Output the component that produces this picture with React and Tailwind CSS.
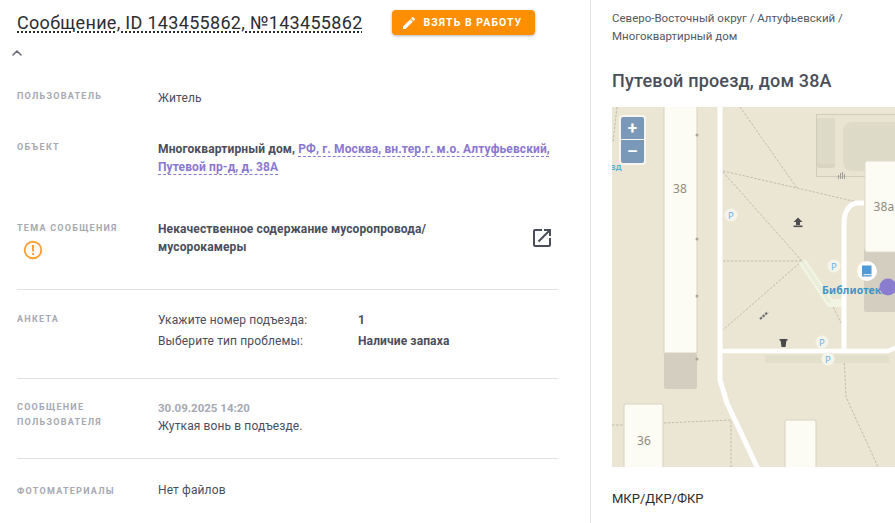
import { ChevronUp } from 'lucide-react'

// ── MAP ──
const parkings = [[119, 108], [222, 159], [210, 235], [216, 252]]

function MapDrawing() {
  return (
    <svg viewBox="0 0 283 360" className="block w-[283px] h-[360px]" style={{ fontFamily: '"Noto Sans", sans-serif' }}>
      <rect width="283" height="360" fill="#ebe6d3" />

      {/* top complex */}
      <rect x="204.5" y="7.5" width="90" height="62" fill="#e8e4d1" stroke="#d0ccbc" />
      <rect x="205" y="11" width="18" height="50" rx="3" fill="#d8d4c1" />
      <rect x="205" y="11" width="18" height="46" rx="3" fill="#dedac8" />
      <rect x="231" y="15" width="70" height="49" rx="9" fill="#dedac8" />

      {/* dashed paths */}
      <g fill="none" stroke="#b6b09c" strokeWidth="0.8" strokeDasharray="2.5 1.5">
        <path d="M111 64L185 81L245 95" />
        <path d="M128 0L185 81" />
        <path d="M111 65L190 154" />
        <path d="M111 154H190" />
        <path d="M190 154L111 223" />
        <path d="M5 0L1 35" />
        <path d="M218 193L229 216" />
        <path d="M232 248L234 290L266 360" />
        <path d="M0 318H12" />
        <path d="M52 316L119 313V360" />
      </g>

      {/* pedestrian strip */}
      <path d="M190 154L218 196H232" fill="none" stroke="#f1f4e2" strokeWidth="8" />
      <path d="M190 154L218 196" fill="none" stroke="#e1e5d2" strokeWidth="3" strokeDasharray="1 1" />
      <rect x="153" y="248" width="124" height="8" fill="#e2dfcb" />

      {/* buildings */}
      <rect x="52" y="-4" width="33" height="250" fill="#fcfbf4" stroke="#d8d3bf" />
      <rect x="52" y="246" width="33" height="36" rx="2" fill="#d3cebf" />
      <circle cx="85" cy="28" r="1.5" fill="#aaa698" />
      <circle cx="85" cy="132" r="1.5" fill="#aaa698" />
      <circle cx="85" cy="189" r="1.5" fill="#aaa698" />
      <circle cx="85" cy="252" r="1.5" fill="#aaa698" />
      <rect x="252" y="140" width="40" height="65" rx="2" fill="#d3cebf" />
      <rect x="253" y="54" width="40" height="91" rx="2" fill="#fcfbf4" stroke="#e0dccb" />
      <rect x="12" y="297" width="39" height="70" rx="2" fill="#fcfbf4" stroke="#d8d3bf" />
      <rect x="173" y="313" width="31" height="60" rx="2" fill="#fcfbf4" stroke="#d8d3bf" />

      {/* roads */}
      <g fill="none" stroke="#ffffff" strokeWidth="5">
        <path d="M108 -2V273L115 296L146 362" />
        <path d="M108 244H276L285 240" strokeWidth="4.5" />
        <path d="M252 96H246C238 96 232 104 232 116V244" />
      </g>

      {/* house numbers */}
      <g fill="#8f8c80" fontSize="12" textAnchor="middle">
        <text x="68" y="86">38</text>
        <text x="272" y="104">38а</text>
        <text x="32" y="338">36</text>
      </g>

      {/* parking */}
      {parkings.map(([x, y]) => (
        <g key={`${x}-${y}`}>
          <circle cx={x} cy={y} r="6.5" fill="#f5f4ea" />
          <text x={x} y={y + 3.5} fontSize="9.5" textAnchor="middle" fill="#6eb1e6">P</text>
        </g>
      ))}

      {/* small pois */}
      <path d="M186 110.5L190.5 115H188V118H184V115H181.5Z" fill="#4e4e52" />
      <rect x="181.5" y="118.5" width="9" height="1.6" fill="#4e4e52" />
      <g fill="#9b9a94">
        <rect x="226" y="68" width="1" height="4" />
        <rect x="228" y="66" width="1" height="6" />
        <rect x="230" y="65" width="1" height="7" />
        <rect x="232" y="67" width="1" height="5" />
      </g>
      <path d="M148 212L156 205" stroke="#6d6d70" strokeWidth="2.2" strokeDasharray="2.5 1" />
      <path d="M168.5 233H174.5L173.5 240H169.5Z" fill="#48484c" />
      <rect x="167.5" y="232" width="8" height="1.5" fill="#48484c" />

      {/* library */}
      <circle cx="255" cy="164" r="10" fill="#ffffff" />
      <path d="M250 158.5H259.5V169.5H250Z" fill="#4f9ad6" />
      <rect x="251.5" y="167" width="8" height="1.2" fill="#d9ecf8" />
      <text x="210" y="187" fontSize="10.5" fontWeight="700" fill="#3d94c9">Библиотека</text>
      <circle cx="276" cy="180" r="8.5" fill="#8a7ccf" />

      <text x="-1" y="63" fontSize="9" fontWeight="600" fill="#52b2d6">зд</text>
    </svg>
  )
}

// ── ROW ──
function Row({ label, className, children }) {
  return (
    <div className={`grid grid-cols-[141px_1fr] ${className}`}>
      <div>{label}</div>
      <div>{children}</div>
    </div>
  )
}

const Label = ({ children, className = '' }) => (
  <p className={`text-[9px] leading-[15px] font-bold uppercase tracking-[0.14em] text-[#a6a9b3] ${className}`}>{children}</p>
)

export default function App() {
  return (
    <div className="flex h-[523px] w-[895px] overflow-hidden bg-white text-[12px] leading-[18px] tracking-[0.01em] text-[#4a4e5c]" style={{ fontFamily: 'Roboto, sans-serif' }}>
      {/* Left panel */}
      <div className="w-[591px] shrink-0 border-r border-[#e0e0e0] pl-[17px] pr-[32px]">
        <div className="flex h-[36px] items-start pt-[10px]">
          <h1 className="mt-[1px] text-[18px] leading-[24px] font-normal tracking-[0.31px] text-[#2b2d33] underline decoration-dotted decoration-[2px] underline-offset-[2px] whitespace-nowrap">
            Сообщение, ID 143455862, №143455862
          </h1>
          <button className="ml-[29px] flex h-[25px] w-[143px] items-center rounded-[4px] bg-[#ff8f00] pl-[9px] text-[10.5px] font-bold uppercase tracking-[0.1em] text-white shadow-[0_1px_3px_rgba(0,0,0,0.3)] whitespace-nowrap">
            <svg viewBox="0 0 24 24" className="h-[16px] w-[16px]" fill="currentColor">
              <path d="M3 17.25V21h3.75L17.81 9.94l-3.75-3.75L3 17.25zM20.71 7.04a1 1 0 0 0 0-1.41l-2.34-2.34a1 1 0 0 0-1.41 0l-1.83 1.83 3.75 3.75 1.83-1.83z" />
            </svg>
            <span className="ml-[7px]">Взять в работу</span>
          </button>
        </div>

        <div className="h-[52px] pt-[9px]">
          <ChevronUp size={16} strokeWidth={2.4} className="-ml-[8px] text-[#6b6e78]" />
        </div>

        <Row className="pb-[34px]" label={<Label className="mt-[1px]">Пользователь</Label>}>
          <span className="relative top-[1px]">Житель</span>
        </Row>

        <Row className="pb-[44px]" label={<Label>Объект</Label>}>
          <p className="font-bold">
            Многоквартирный дом,{' '}
            <span className="text-[#8a78d0] underline decoration-dashed underline-offset-[3px]">
              РФ, г. Москва, вн.тер.г. м.о. Алтуфьевский, Путевой пр-д, д. 38А
            </span>
          </p>
        </Row>

        <Row
          className="h-[70px] border-b border-[#e2e2e2]"
          label={
            <>
              <Label className="mt-[1px]">Тема сообщения</Label>
              <svg viewBox="0 0 20 20" className="ml-[6px] mt-[4px] h-[20px] w-[20px]" fill="none">
                <circle cx="10" cy="10" r="8.3" stroke="#ffa033" strokeWidth="1.9" />
                <rect x="9" y="5" width="2" height="6.5" fill="#ffa033" />
                <rect x="9" y="13" width="2" height="2" fill="#ffa033" />
              </svg>
            </>
          }
        >
          <div className="flex items-start justify-between">
            <p className="w-[290px] font-bold">Некачественное содержание мусоропровода/ мусорокамеры</p>
            <svg viewBox="0 0 24 24" className="mt-[6px] mr-[4px] h-[24px] w-[24px]" fill="#4a4e5c">
              <path d="M19 19H5V5h7V3H5a2 2 0 0 0-2 2v14a2 2 0 0 0 2 2h14c1.1 0 2-.9 2-2v-7h-2v7zM14 3v2h3.59l-9.83 9.83 1.41 1.41L19 6.41V10h2V3h-7z" />
            </svg>
          </div>
        </Row>

        <Row className="h-[89px] border-b border-[#e2e2e2] pt-[20px]" label={<Label className="mt-[2px]">Анкета</Label>}>
          <div className="grid grid-cols-[200px_1fr] leading-[21px]">
            <span>Укажите номер подъезда:</span>
            <span className="font-bold">1</span>
            <span>Выберите тип проблемы:</span>
            <span className="font-bold">Наличие запаха</span>
          </div>
        </Row>

        <Row
          className="h-[80px] border-b border-[#e2e2e2] pt-[20px]"
          label={
            <Label className="mt-[1px]">
              Сообщение
              <br />
              пользователя
            </Label>
          }
        >
          <p className="text-[11.5px] font-bold tracking-normal text-[#a6a9b3]">30.09.2025 14:20</p>
          <p>Жуткая вонь в подъезде.</p>
        </Row>

        <Row className="pt-[22px]" label={<Label className="mt-[3px]">Фотоматериалы</Label>}>
          Нет файлов
        </Row>
      </div>

      {/* Right panel */}
      <div className="min-w-0 flex-1 pl-[21px]">
        <p className="w-[283px] pt-[9px] text-[11.5px] leading-[18px] tracking-normal text-[#555863]">
          Северо-Восточный округ / Алтуфьевский / Многоквартирный дом
        </p>
        <h2 className="mt-[24px] text-[18px] leading-[24px] font-medium tracking-[0.01em] text-[#4a4e5c]">Путевой проезд, дом 38А</h2>
        <div className="relative mt-[14px] h-[360px] w-[283px]">
          <MapDrawing />
          <div className="absolute left-[9px] top-[10px] flex flex-col gap-[1px] rounded-[2px] bg-white/70 shadow-[0_0_0_2px_rgba(255,255,255,0.6)]">
            <button className="flex h-[22px] w-[23px] items-center justify-center rounded-t-[2px] bg-[#7a98b8] text-[17px] leading-none font-bold text-white">+</button>
            <button className="flex h-[23px] w-[23px] items-center justify-center rounded-b-[2px] bg-[#7a98b8] text-[17px] leading-none font-bold text-white">–</button>
          </div>
        </div>
        <p className="mt-[23px] text-[13px] leading-[18px] tracking-normal text-[#2b2d33]">МКР/ДКР/ФКР</p>
      </div>
    </div>
  )
}
